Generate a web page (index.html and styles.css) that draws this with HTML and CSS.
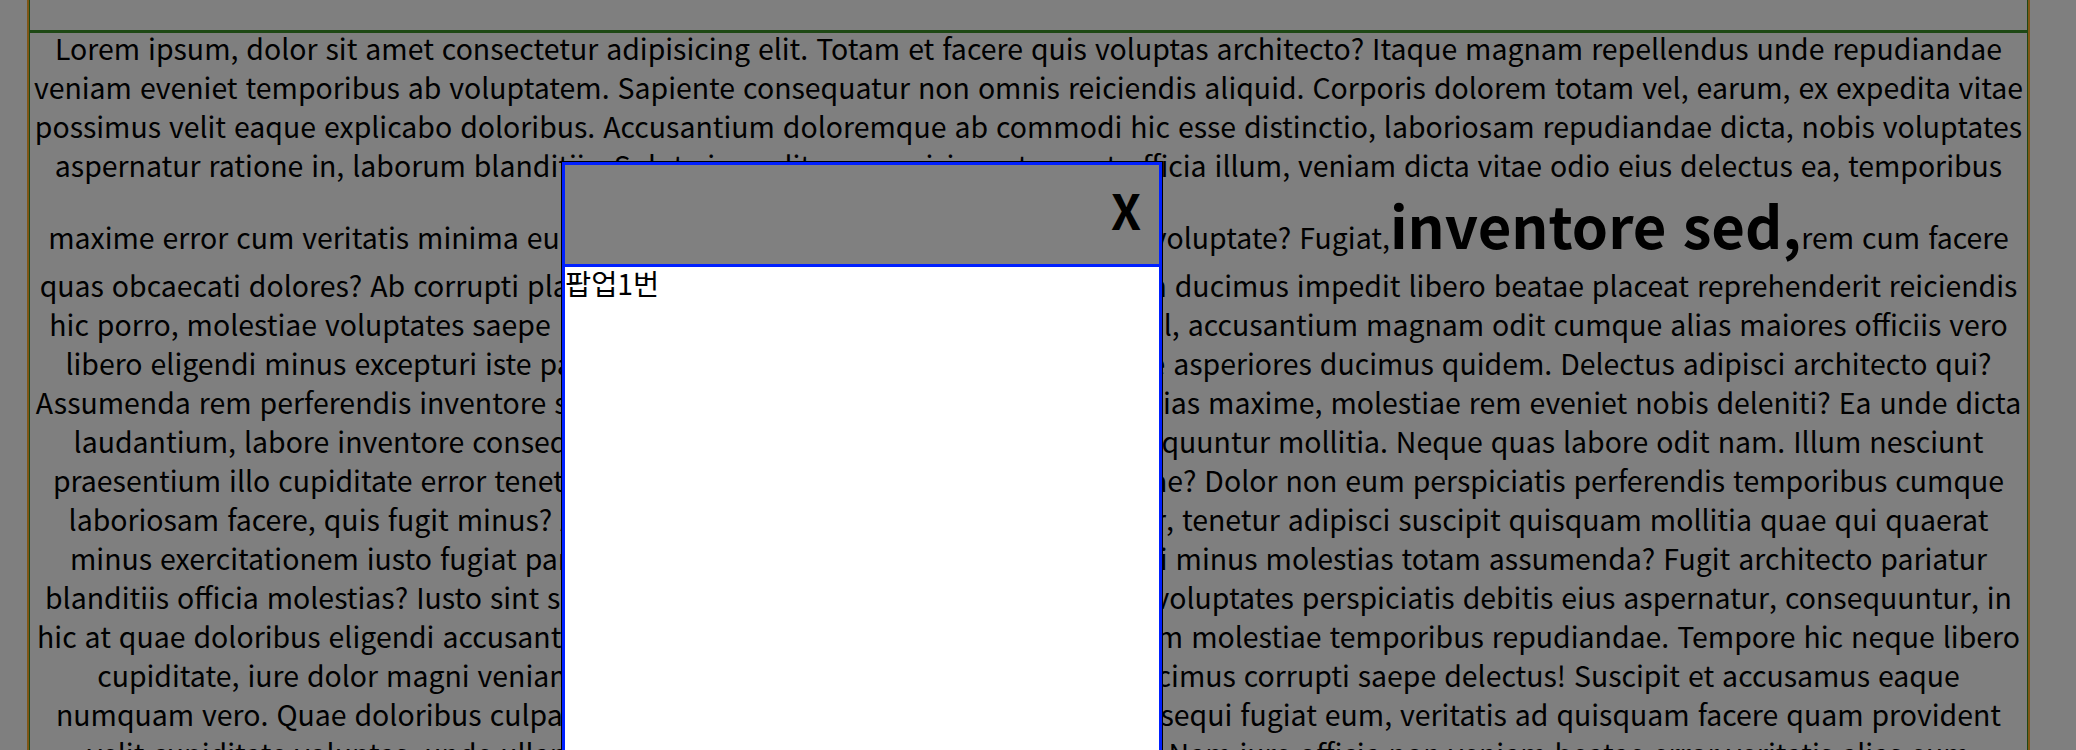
FILE: index.html
```html
<!DOCTYPE html>
<html lang="ko">
<head>
    <meta charset="UTF-8">
    <meta name="viewport" content="width=device-width, initial-scale=1.0">
    <title>팝업</title>
    <link rel="stylesheet" href="styles.css">
</head>
<body class="modal-open">

    <div class="wrap">
        <div class="box">
            <div class="top"></div>
            <p class="text">
                Lorem ipsum, dolor sit amet consectetur adipisicing elit. Totam et facere quis voluptas architecto? Itaque magnam repellendus unde repudiandae<br>
                veniam eveniet temporibus ab voluptatem. Sapiente consequatur non omnis reiciendis aliquid. Corporis dolorem totam vel, earum, ex expedita vitae<br>
                possimus velit eaque explicabo doloribus. Accusantium doloremque ab commodi hic esse distinctio, laboriosam repudiandae dicta, nobis voluptates<br>
                aspernatur ratione in, laborum blanditiis. Soluta impedit rerum nisi, nostrum et officia illum, veniam dicta vitae odio eius delectus ea, temporibus<br>
                maxime error cum veritatis minima eum, nemo tempora qui adipisci rerum id quo voluptate? Fugiat,<span class="big">inventore sed,</span>rem cum facere<br>
                quas obcaecati dolores? Ab corrupti placeat voluptas sint numquam, officia quo non ducimus impedit libero beatae placeat reprehenderit reiciendis<br>
                hic porro, molestiae voluptates saepe nesciunt amet autem harum dolor, sequi nihil, accusantium magnam odit cumque alias maiores officiis vero<br>
                libero eligendi minus excepturi iste pariatur dolorem ut id sint nulla, maxime quae asperiores ducimus quidem. Delectus adipisci architecto qui?<br>
                Assumenda rem perferendis inventore sint odio, quidem nisi error ullam aut quod alias maxime, molestiae rem eveniet nobis deleniti? Ea unde dicta<br>
                laudantium, labore inventore consequatur ab nostrum dolores, earum hinc consequuntur mollitia. Neque quas labore odit nam. Illum nesciunt<br>
                praesentium illo cupiditate error tenetur, quo magni ipsam sunt quasi dolorem quae? Dolor non eum perspiciatis perferendis temporibus cumque<br>
                laboriosam facere, quis fugit minus? Aspernatur nemo vitae, eius rerum ipsa dolor, tenetur adipisci suscipit quisquam mollitia quae qui quaerat<br>
                minus exercitationem iusto fugiat pariatur aliquid earum, deserunt fugiat quas qui minus molestias totam assumenda? Fugit architecto pariatur<br>
                blanditiis officia molestias? Iusto sint saepe dignissimos minus nostrum quidem et voluptates perspiciatis debitis eius aspernatur, consequuntur, in<br>
                hic at quae doloribus eligendi accusantium, fuga sapiente nullam vero, deleniti ipsum molestiae temporibus repudiandae. Tempore hic neque libero<br>
                cupiditate, iure dolor magni veniam quibusdam aut rerum vel, nobis ratione ducimus corrupti saepe delectus! Suscipit et accusamus eaque<br>
                numquam vero. Quae doloribus culpa nihil blanditiis voluptatem eam aliquam consequi fugiat eum, veritatis ad quisquam facere quam provident<br>
                velit cupiditate voluptas, unde ullam quaerat tempor quibusdam, iure fugit ipsa! Nam iure officia non veniam beatae error veritatis alias eum<br>
                quisquam, earum nemo sapiente dolorem tempore. Ipsa, sequi!
            </p>
        </div>
    </div>

    <!-- 팝업 -->
    <div class="dim"></div>
    <div class="popup">
        <div class="popup-head">
            <span class="close">X</span>
        </div>
        <div class="popup-body">팝업1번</div>
    </div>

</body>
</html>
```
FILE: styles.css
```css
body {
    margin: 0;
    font-family: "Noto Sans CJK KR", sans-serif;
    font-size: 28.45px;
    color: #000;
    background-color: #fff;
}

.modal-open {
    overflow: hidden;
}

.wrap {
    width: 1999px;
    margin-left: 27px;
    border-left: 2px solid #ffac2c;
    border-right: 2px solid #ffac2c;
}

.box {
    border-left: 1px solid #3c9028;
    border-right: 1px solid #3c9028;
}

.top {
    height: 30px;
    border-bottom: 3px solid #3c9028;
}

.text {
    margin: -5px 0 0;
    line-height: 39px;
    text-align: center;
    white-space: nowrap;
}

.big {
    font-size: 58px;
    font-weight: bold;
    line-height: 1.4;
}

.dim {
    position: fixed;
    top: 0;
    left: 0;
    width: 100%;
    height: 100%;
    background-color: rgba(0, 0, 0, 0.5);
}

.popup {
    position: fixed;
    top: 162px;
    left: 562px;
    width: 600px;
    box-sizing: border-box;
    border: 3px solid #0020ff;
    outline: 1px solid #000;
    background-color: #fff;
}

.popup-head {
    display: flex;
    justify-content: flex-end;
    align-items: center;
    box-sizing: border-box;
    height: 102px;
    padding: 0 18px 12px 0;
    background-color: #808080;
    border-bottom: 3px solid #0020ff;
}

.close {
    font-size: 48px;
    font-weight: bold;
    line-height: 1;
    cursor: pointer;
}

.popup-body {
    height: 600px;
    line-height: 1.1;
}
```
